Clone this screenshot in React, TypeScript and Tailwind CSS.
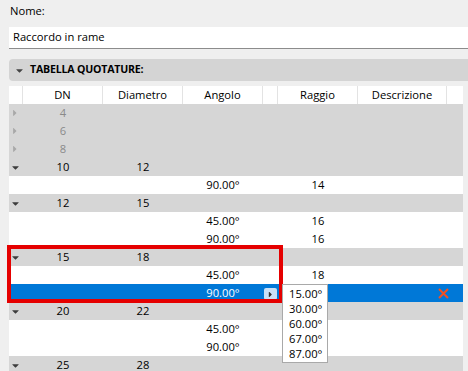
import { FaCaretDown, FaCaretRight } from "react-icons/fa";

type Row = {
  kind: "group" | "child";
  dn?: string;
  diam?: string;
  angle?: string;
  radius?: string;
  collapsed?: boolean;
  selected?: boolean;
};

const rows: Row[] = [
  { kind: "group", dn: "4", collapsed: true },
  { kind: "group", dn: "6", collapsed: true },
  { kind: "group", dn: "8", collapsed: true },
  { kind: "group", dn: "10", diam: "12" },
  { kind: "child", angle: "90.00°", radius: "14" },
  { kind: "group", dn: "12", diam: "15" },
  { kind: "child", angle: "45.00°", radius: "16" },
  { kind: "child", angle: "90.00°", radius: "16" },
  { kind: "group", dn: "15", diam: "18" },
  { kind: "child", angle: "45.00°", radius: "18" },
  { kind: "child", angle: "90.00°", selected: true },
  { kind: "group", dn: "20", diam: "22" },
  { kind: "child", angle: "45.00°" },
  { kind: "child", angle: "90.00°" },
  { kind: "group", dn: "25", diam: "28" },
];

const options = ["15.00°", "30.00°", "60.00°", "67.00°", "87.00°"];

const TableRow = ({ row }: { row: Row }) => {
  const bg = row.selected ? "bg-[#0078d7] text-white" : row.kind === "group" ? "bg-[#d6d6d6]" : "bg-white";
  const txt = row.collapsed ? "text-[#8a8a8a]" : "";
  return (
    <div className={`flex h-[18px] items-center ${bg} ${txt}`}>
      <div className="w-[14px] flex items-center justify-center">
        {row.kind === "group" &&
          (row.collapsed ? (
            <FaCaretRight className="text-[10px] text-[#a8a8a8] -ml-[2px]" />
          ) : (
            <FaCaretDown className="text-[11px] text-[#3c3c3c] -ml-[2px]" />
          ))}
      </div>
      <div className="w-[80px] text-center">{row.dn}</div>
      <div className="w-[80px] text-center">{row.diam}</div>
      <div className="w-[80px] text-center">{row.angle}</div>
      <div className="w-[15px] flex justify-center">
        {row.selected && (
          <div className="w-[13px] h-[12px] mt-[2px] bg-[#c9e0f7] rounded-[2px] flex items-center justify-center">
            <FaCaretRight className="text-[9px] text-[#333]" />
          </div>
        )}
      </div>
      <div className="w-[80px] text-center">{row.radius}</div>
      <div className="w-[89px]" />
      <div className="w-[16px] flex items-center justify-center -ml-[12px]">
        {row.selected && (
          <svg width="11" height="11" viewBox="0 0 11 11">
            <path d="M1 1 L10 10 M10 1 L1 10" stroke="#f25022" strokeWidth="2" />
          </svg>
        )}
      </div>
    </div>
  );
};

export default function App() {
  return (
    <div
      className="w-[468px] h-[371px] overflow-hidden bg-[#efefef] pl-[9px] text-[11.2px] text-black"
      style={{ fontFamily: '"Open Sans", "Noto Sans", sans-serif' }}
    >
      <div className="h-[27px] pt-[3px] leading-[16px] pl-[1px]">Nome:</div>
      <div className="h-[22px] bg-white border-b border-[#8c8c8c] flex items-center pl-[4px]">
        Raccordo in rame
      </div>
      <div className="h-[10px]" />
      <div className="h-[22px] bg-[#d4d4d4] rounded-l-[4px] flex items-center pl-[5px] gap-[5px] font-bold text-[10.6px] tracking-[-0.2px]">
        <FaCaretDown className="text-[11px] text-[#444]" />
        <span>TABELLA QUOTATURE:</span>
      </div>
      <div className="h-[5px]" />
      <div className="relative w-[454px]">
        <div className="flex h-[18px] bg-white items-center">
          <div className="w-[14px] h-full border-r border-[#e3e3e3]" />
          <div className="w-[80px] h-full border-r border-[#e3e3e3] flex items-center justify-center">DN</div>
          <div className="w-[80px] h-full border-r border-[#e3e3e3] flex items-center justify-center">Diametro</div>
          <div className="w-[80px] h-full border-r border-[#e3e3e3] flex items-center justify-center">Angolo</div>
          <div className="w-[15px] h-full border-r border-[#e3e3e3]" />
          <div className="w-[80px] h-full border-r border-[#e3e3e3] flex items-center justify-center">Raggio</div>
          <div className="w-[89px] h-full border-r border-[#e3e3e3] flex items-center justify-center">Descrizione</div>
          <div className="w-[16px] h-full" />
        </div>
        {rows.map((r, i) => (
          <TableRow key={i} row={r} />
        ))}

        {/* highlight frame */}
        <div className="absolute left-[-2px] top-[159px] w-[276px] h-[58px] border-[4px] border-[#e50000] pointer-events-none" />

        {/* angle picker */}
        <div className="absolute left-[273px] top-[198px] w-[46px] bg-white border border-[#a9a9a9] py-[1px] leading-[15px]">
          {options.map((o) => (
            <div key={o} className="pl-[6px] h-[15px]">
              {o}
            </div>
          ))}
        </div>
      </div>
    </div>
  );
}
